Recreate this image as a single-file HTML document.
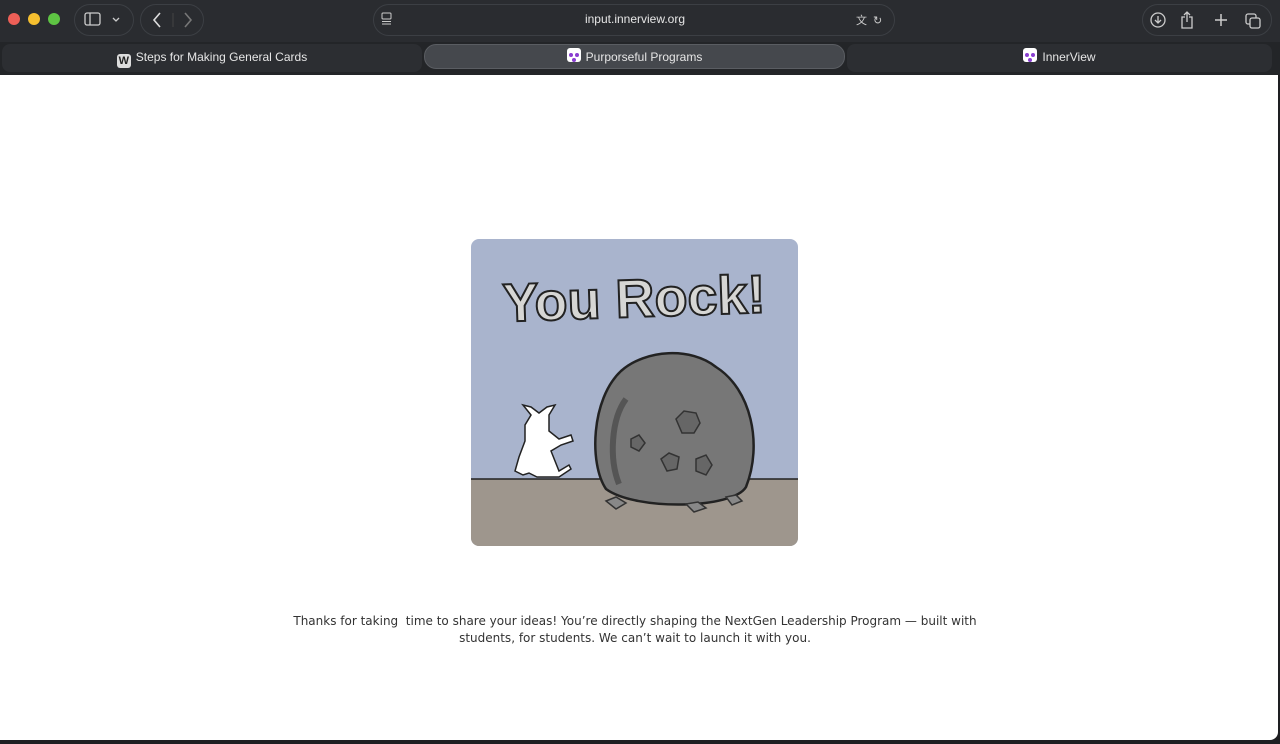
<!DOCTYPE html>
<html><head><meta charset="utf-8"><style>
*{margin:0;padding:0;box-sizing:border-box}
body{width:1280px;height:744px;background:#1e1f22;font-family:"Liberation Sans",sans-serif;position:relative;overflow:hidden}
.top{position:absolute;left:0;top:0;width:1280px;height:42px;background:#2a2c30}
.tabs{position:absolute;left:0;top:42px;width:1280px;height:33px;background:#232528}
.dot{position:absolute;top:13px;width:12px;height:12px;border-radius:50%}
.pill{position:absolute;border:1px solid #3c3f44;border-radius:16px;background:#2a2c30}
.page{position:absolute;left:0;top:75px;width:1278px;height:665px;background:#fff;border-bottom-right-radius:8px}
.tab{position:absolute;top:44px;height:25px;color:#e6e6e6;font-size:12px;line-height:25px;text-align:center}
.ic{display:inline-block;width:14px;height:14px;border-radius:3px;background:#fff;vertical-align:-3px;margin-right:5px;position:relative}
.txt{position:absolute;left:0;width:1270px;top:613px;text-align:center;line-height:17px;color:#333;font-family:"DejaVu Sans","Liberation Sans",sans-serif;font-size:12px}
</style></head><body>
<div class="top">
<div class="dot" style="left:8px;background:#ed5f57"></div>
<div class="dot" style="left:28px;background:#f5bf2f"></div>
<div class="dot" style="left:48px;background:#5ec443"></div>
<div class="pill" style="left:74px;top:4px;width:60px;height:32px"></div>
<svg style="position:absolute;left:84px;top:12px" width="40" height="16"><rect x="1" y="1" width="15" height="12" rx="2" fill="none" stroke="#ccc" stroke-width="1.3"/><line x1="6" y1="1" x2="6" y2="13" stroke="#ccc" stroke-width="1.3"/><path d="M29 6l3 3 3-3" fill="none" stroke="#ccc" stroke-width="1.3"/></svg>
<div class="pill" style="left:140px;top:4px;width:64px;height:32px"></div>
<svg style="position:absolute;left:148px;top:10px" width="50" height="20"><path d="M12 3l-6 7 6 7" fill="none" stroke="#ddd" stroke-width="1.6"/><line x1="25" y1="3" x2="25" y2="17" stroke="#444"/><path d="M37 3l6 7-6 7" fill="none" stroke="#777" stroke-width="1.6"/></svg>
<div class="pill" style="left:373px;top:4px;width:522px;height:32px"></div>
<svg style="position:absolute;left:380px;top:12px" width="14" height="14"><rect x="2" y="1" width="9" height="6" rx="1" fill="none" stroke="#ccc"/><line x1="2" y1="9.5" x2="11" y2="9.5" stroke="#ccc"/><line x1="2" y1="12" x2="11" y2="12" stroke="#ccc"/></svg>
<div style="position:absolute;left:560px;width:150px;top:12px;text-align:center;color:#e6e6e6;font-size:12px">input.innerview.org</div>
<div style="position:absolute;left:856px;top:12px;color:#ccc;font-size:11px">文<span style="margin-left:6px">↻</span></div>
<div class="pill" style="left:1142px;top:4px;width:130px;height:32px"></div>
<svg style="position:absolute;left:1148px;top:9px" width="120" height="22"><circle cx="10" cy="11" r="7" fill="none" stroke="#ccc" stroke-width="1.3"/><path d="M10 7v7M7 11l3 3 3-3" fill="none" stroke="#ccc" stroke-width="1.3"/><path d="M37 8h-3v11h10V8h-3M39 3v10M36 6l3-3 3 3" fill="none" stroke="#ccc" stroke-width="1.3"/><path d="M73 5v12M67 11h12" stroke="#ccc" stroke-width="1.5"/><rect x="98" y="5" width="10" height="10" rx="2" fill="none" stroke="#ccc" stroke-width="1.3"/><rect x="102" y="9" width="10" height="10" rx="2" fill="#2a2c30" stroke="#ccc" stroke-width="1.3"/></svg>
</div>
<div class="tabs">
<div style="position:absolute;left:2px;top:2px;width:420px;height:28px;background:#2c2e32;border-radius:8px"></div>
<div style="position:absolute;left:424px;top:2px;width:421px;height:25px;background:#45484d;border:1px solid #5a5d62;border-radius:12px"></div>
<div style="position:absolute;left:847px;top:2px;width:425px;height:28px;background:#2c2e32;border-radius:8px"></div>
</div>
<div class="tab" style="left:2px;width:420px;top:45px"><span class="ic" style="background:#ddd;color:#222;font-size:11px;line-height:14px;font-weight:bold;text-align:center">W</span>Steps for Making General Cards</div>
<div class="tab" style="left:424px;width:421px;top:45px"><span class="ic"><svg width="14" height="14"><circle cx="4" cy="5" r="2" fill="#8a3fd1"/><circle cx="10" cy="5" r="2" fill="#8a3fd1"/><circle cx="7" cy="10" r="2" fill="#8a3fd1"/></svg></span>Purporseful Programs</div>
<div class="tab" style="left:847px;width:425px;top:45px"><span class="ic"><svg width="14" height="14"><circle cx="4" cy="5" r="2" fill="#8a3fd1"/><circle cx="10" cy="5" r="2" fill="#8a3fd1"/><circle cx="7" cy="10" r="2" fill="#8a3fd1"/></svg></span>InnerView</div>
<div class="page">
<svg style="position:absolute;left:471px;top:164px" width="327" height="307" viewBox="0 0 327 307">
<defs><clipPath id="c"><rect width="327" height="307" rx="8"/></clipPath></defs>
<g clip-path="url(#c)">
<rect width="327" height="307" fill="#a9b4cd"/>
<rect y="240" width="327" height="67" fill="#9e968d"/>
<line x1="0" y1="240" x2="327" y2="240" stroke="#222" stroke-width="1.5"/>
<text x="163" y="78" text-anchor="middle" font-family="Liberation Sans" font-weight="bold" font-size="54" fill="#d6d6d4" stroke="#222" stroke-width="2" transform="rotate(-2 163 60)">You Rock!</text>
<path d="M135 250 C118 225 120 160 150 132 C175 110 220 108 245 128 C280 150 292 205 275 248 C262 270 165 272 135 250Z" fill="#777" stroke="#222" stroke-width="2.5"/>
<path d="M148 245 C138 220 140 180 155 160" fill="none" stroke="#555" stroke-width="6"/>
<path d="M205 180 l8-8 12 2 4 10-6 10-12 0z M190 220 l8-6 10 4-2 12-10 2z M225 220 l10-4 6 10-6 10-10-4z M160 200 l8-4 6 8-6 8-8-4z" fill="#666" stroke="#333" stroke-width="1.5"/>
<path d="M135 262 l10-4 10 6-10 6z M215 265 l12-2 8 6-12 4z M255 258 l10-2 6 6-10 4z" fill="#888" stroke="#333" stroke-width="1.5"/>
<path d="M60 176 l-8-10 8 2 8 6 8-6 8-2-6 10 0 16 10 8 12 -4 2 6 -12 4 -10 6 8 20 10-6 2 4-12 8 -22 0 -8-4 -6 2 -8-4 4-14 6-16 0-16z" fill="#fff" stroke="#222" stroke-width="1.5"/>
</g></svg>
</div>
<div class="txt">Thanks for taking&nbsp; time to share your ideas! You’re directly shaping the NextGen Leadership Program — built with<br>students, for students. We can’t wait to launch it with you.</div>
</body></html>
